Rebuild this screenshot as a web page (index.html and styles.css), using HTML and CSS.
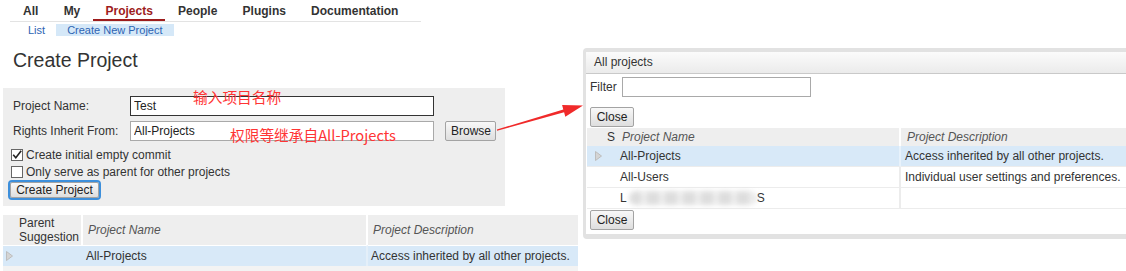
FILE: index.html
```html
<!DOCTYPE html>
<html lang="en">
<head>
  <meta charset="UTF-8" />
  <title>Create Project</title>
  <link rel="stylesheet" href="styles.css">
</head>
<body>
  <div class="topnav">
    <a class="tab">All</a>
    <a class="tab">My</a>
    <a class="tab active">Projects</a>
    <a class="tab">People</a>
    <a class="tab">Plugins</a>
    <a class="tab">Documentation</a>
  </div>
  <div class="subnav">
    <a>List</a>
    <a class="sel">Create New Project</a>
  </div>

  <h1>Create Project</h1>

  <div class="panel">
    <div class="field">
      <label>Project Name:</label>
      <input type="text" class="focused" value="Test" />
    </div>
    <div class="field">
      <label>Rights Inherit From:</label>
      <input type="text" value="All-Projects" />
      <button class="btn browse">Browse</button>
    </div>
    <div class="check">
      <span class="box"><svg width="10" height="10" viewBox="0 0 10 10"><path d="M1.2 4.8 L3.8 7.8 L9.2 0.8" fill="none" stroke="#222" stroke-width="1.6"/></svg></span>
      Create initial empty commit
    </div>
    <div class="check">
      <span class="box"></span>
      Only serve as parent for other projects
    </div>
    <button class="btn create">Create Project</button>
  </div>

  <table class="suggest">
    <colgroup>
      <col style="width:14px"><col style="width:66px"><col style="width:285px"><col style="width:210px">
    </colgroup>
    <tr>
      <th></th>
      <th class="ps">Parent<br>Suggestion</th>
      <th class="it">Project Name</th>
      <th class="it last">Project Description</th>
    </tr>
    <tr class="hl">
      <td class="ico"><svg width="7" height="10" viewBox="0 0 7 10"><path d="M0.5 0.5 L6.5 5 L0.5 9.5 Z" fill="#d4d4d4" stroke="#bdbdbd"/></svg></td>
      <td></td>
      <td>All-Projects</td>
      <td class="last">Access inherited by all other projects.</td>
    </tr>
  </table>
  <div class="strip"></div>

  <!-- annotations -->
  <div class="note n1">输入项目名称</div>
  <div class="note n2">权限等继承自All-Projects</div>
  <svg class="arrow" width="100" height="35" viewBox="490 100 100 35">
    <polygon points="496.9,129.5 563.3,109.5 562.1,105.1 583,105.5 565.3,116.7 564.1,112.3 497.1,130.8" fill="#f02a2a"/>
  </svg>

  <div class="popup">
    <div class="popup-head">All projects</div>
    <div class="filter-row">
      <span>Filter</span>
      <input type="text" />
    </div>
    <button class="btn close">Close</button>
    <table class="ptable">
      <colgroup>
        <col style="width:16px"><col style="width:14px"><col style="width:284px"><col>
      </colgroup>
      <tr>
        <th></th>
        <th class="s">S</th>
        <th class="it name">Project Name</th>
        <th class="it">Project Description</th>
      </tr>
      <tr class="hl">
        <td class="ico"><svg width="7" height="10" viewBox="0 0 7 10"><path d="M0.5 0.5 L6.5 5 L0.5 9.5 Z" fill="#d4d4d4" stroke="#bdbdbd"/></svg></td>
        <td></td>
        <td class="name">All-Projects</td>
        <td class="desc">Access inherited by all other projects.</td>
      </tr>
      <tr>
        <td></td>
        <td></td>
        <td class="name">All-Users</td>
        <td class="desc">Individual user settings and preferences.</td>
      </tr>
      <tr>
        <td></td>
        <td></td>
        <td class="name">L<span class="blur"></span>S</td>
        <td class="desc"></td>
      </tr>
    </table>
    <button class="btn close bottom">Close</button>
  </div>
</body>
</html>
```

FILE: styles.css
```css
body {
  margin: 0;
  font-family: "Liberation Sans", Arial, sans-serif;
  font-size: 12px;
  color: #333;
  background: #fff;
  width: 1126px;
  height: 271px;
  overflow: hidden;
  position: relative;
}

.topnav {
  display: flex;
  margin-left: 10px;
  padding-left: 0.5px;
  width: 410px;
  height: 21px;
  border-bottom: 1px solid #e3e3e3;
}

.topnav .tab {
  padding: 4px 12.6px 0;
  line-height: 15px;
  font-weight: bold;
  color: #333;
}

.topnav .active {
  color: #9d1c1c;
  border-bottom: 2px solid #9d1c1c;
}

.subnav {
  display: flex;
  margin: 2px 0 0 17px;
  font-size: 11px;
  line-height: 12px;
}

.subnav a {
  padding: 0 11px;
  color: #2d64b3;
}

.subnav .sel {
  background: #d5e8f8;
}

h1 {
  margin: 12px 0 0 13px;
  font-size: 19.5px;
  line-height: 24px;
  font-weight: normal;
  color: #333;
}

.panel {
  margin: 16px 0 0 3px;
  width: 495px;
  padding: 8px 0 6px 7px;
  background: #eee;
}

.field {
  display: flex;
  align-items: center;
  height: 20px;
  margin-bottom: 5px;
}

.field label {
  width: 117px;
  margin-left: 3px;
}

input {
  box-sizing: border-box;
  height: 20px;
  padding: 0 3px;
  border: 1px solid #a9a9a9;
  font-family: "Liberation Sans", Arial, sans-serif;
  font-size: 12px;
  color: #222;
  background: #fff;
  outline: none;
}

.field input {
  width: 304px;
}

.field input.focused {
  border-color: #333;
}

.btn {
  box-sizing: border-box;
  height: 20px;
  padding: 0 5px;
  font-family: "Liberation Sans", Arial, sans-serif;
  font-size: 12px;
  color: #222;
  background: linear-gradient(#f8f8f8, #dedede);
  border: 1px solid #a3a3a3;
  border-radius: 2px;
}

.browse {
  width: 51px;
  margin-left: 11px;
}

.check {
  display: flex;
  align-items: center;
  height: 17px;
}

.box {
  width: 10px;
  height: 10px;
  margin: 0 3px 0 1px;
  border: 1px solid #666;
  background: #fff;
}

.box svg {
  display: block;
}

.create {
  display: block;
  width: 89px;
  height: 16px;
  margin: 2px 0 2px 0;
  padding: 0 4px;
  outline: 2px solid #3d8fdb;
}

.suggest {
  margin: 9px 0 0 3px;
  width: 575px;
  table-layout: fixed;
  border-collapse: separate;
  border-spacing: 0;
}

.suggest th {
  height: 30px;
  padding: 0 0 0 5px;
  background: #eee;
  font-weight: normal;
  text-align: left;
  line-height: 14px;
  border-right: 2px solid #fff;
}

.suggest th:first-child {
  border-right: none;
}

.suggest th.ps {
  padding-left: 2px;
}

.suggest th.last,
.suggest td.last {
  border-right: none;
}

.it {
  font-style: italic;
  color: #555;
}

.suggest td {
  height: 20px;
  padding: 0 0 0 3px;
  border-top: 1px solid #fff;
  border-right: 2px solid #e4eff9;
}

.suggest td:first-child,
.suggest td:nth-child(2) {
  border-right: none;
}

.hl td {
  background: #d8e9f8;
}

td.ico {
  padding-left: 3px;
}

td.ico svg {
  display: block;
}

.strip {
  margin-left: 3px;
  width: 575px;
  height: 5px;
  background: #f3f3f3;
}

.note {
  position: absolute;
  font-family: "Noto Sans CJK SC", "Liberation Sans", sans-serif;
  font-size: 14.7px;
  line-height: 18px;
  color: #ff3434;
  white-space: nowrap;
}

.n1 {
  left: 193px;
  top: 88px;
}

.n2 {
  left: 230px;
  top: 126px;
}

.arrow {
  position: absolute;
  left: 490px;
  top: 100px;
}

.popup {
  position: absolute;
  left: 583px;
  top: 48px;
  width: 600px;
  padding-bottom: 4px;
  background: #fff;
  border-style: solid;
  border-color: #e2e2e2;
  border-width: 4px 4px 5px 3px;
  border-radius: 4px;
}

.popup-head {
  height: 21px;
  line-height: 21px;
  padding-left: 8px;
  background: linear-gradient(#fbfbfb, #ebebeb);
  border-bottom: 1px solid #c9c9c9;
}

.filter-row {
  display: flex;
  align-items: center;
  height: 20px;
  margin: 3px 0 0 4px;
}

.filter-row input {
  width: 189px;
  margin-left: 5px;
}

.close {
  display: block;
  width: 44px;
  margin: 10px 0 0 4px;
}

.close.bottom {
  margin-top: 1px;
}

.ptable {
  margin: 1px 0 0 1px;
  width: 599px;
  table-layout: fixed;
  border-collapse: separate;
  border-spacing: 0;
}

.ptable th {
  height: 18px;
  padding: 0 0 0 6px;
  background: #eee;
  font-weight: normal;
  text-align: left;
}

.ptable th.s {
  padding-left: 4px;
  color: #333;
}

.ptable th.name {
  padding-left: 5px;
  border-right: 2px solid #fff;
}

.ptable td {
  height: 20px;
  padding: 0;
  border-bottom: 1px solid #ececec;
}

.ptable td.ico {
  padding-left: 8px;
}

.ptable td.name {
  padding-left: 3px;
  border-right: 2px solid #ececec;
  white-space: nowrap;
}

.ptable .hl td.name {
  border-right-color: #e8f2fb;
}

.ptable td.desc {
  padding-left: 4px;
}

.blur {
  display: inline-block;
  width: 128px;
  height: 14px;
  margin-left: 2px;
  vertical-align: middle;
  background: repeating-linear-gradient(90deg, #dadada 0 12px, #ebebeb 12px 18px);
  filter: blur(2.5px);
  border-radius: 7px;
  opacity: 0.9;
}
```
